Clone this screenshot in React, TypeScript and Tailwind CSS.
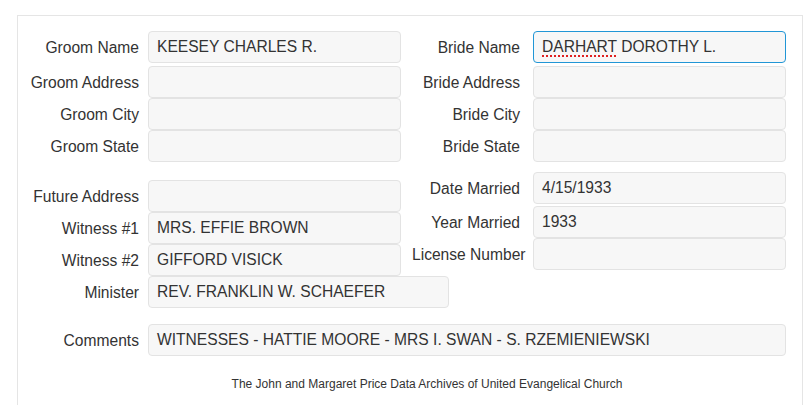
import type { ReactNode } from 'react';

const font = { fontFamily: '"Liberation Sans", Arial, sans-serif' };

type FieldProps = {
  label: string;
  value?: ReactNode;
  focused?: boolean;
  inputWidth?: string;
  className?: string;
};

const Box = ({
  value,
  focused,
  width,
}: {
  value?: ReactNode;
  focused?: boolean;
  width: string;
}) => (
  <div
    className={`${width} h-[32px] shrink-0 flex items-center rounded-[4px] border bg-[#f7f7f7] pl-[8px] text-[15.6px] text-[#333] whitespace-nowrap ${
      focused ? 'border-[#2196d6]' : 'border-[#e3e3e3]'
    }`}
  >
    {value}
  </div>
);

const LeftField = ({ label, value, inputWidth = 'w-[253px]', className = '' }: FieldProps) => (
  <div className={`flex items-center ${className}`}>
    <div className="w-[121px] shrink-0 text-right text-[15.6px] text-[#333] whitespace-nowrap pt-[2px]">
      {label}
    </div>
    <div className="ml-[9px]">
      <Box value={value} width={inputWidth} />
    </div>
  </div>
);

const RightField = ({ label, value, focused, className = '' }: FieldProps) => (
  <div className={`flex items-center ${className}`}>
    <div className="w-[108px] shrink-0 text-right text-[15.6px] text-[#333] whitespace-nowrap pt-[2px]">
      {label}
    </div>
    <div className="ml-[13px]">
      <Box value={value} focused={focused} width="w-[253px]" />
    </div>
  </div>
);

export default function App() {
  return (
    <div className="w-[805px] h-[405px] overflow-hidden bg-white" style={font}>
      <div className="ml-[17px] mt-[15px] w-[786px] h-[400px] border border-b-0 border-[#e5e5e5] pt-[15px]">
        {/* groom / bride */}
        <div className="flex">
          <div className="w-[383px] shrink-0">
            <LeftField label="Groom Name" value="KEESEY CHARLES R." className="mb-[3px]" />
            <LeftField label="Groom Address" />
            <LeftField label="Groom City" />
            <LeftField label="Groom State" />
          </div>
          <div className="pl-[11px]">
            <RightField
              label="Bride Name"
              focused
              className="mb-[3px]"
              value={
                <span>
                  <span className="underline decoration-dotted decoration-[#e02020] decoration-2 underline-offset-[3px]">
                    DARHART
                  </span>{' '}
                  DOROTHY L.
                </span>
              }
            />
            <RightField label="Bride Address" />
            <RightField label="Bride City" />
            <RightField label="Bride State" />
          </div>
        </div>

        {/* wedding details */}
        <div className="flex">
          <div className="w-[383px] shrink-0 mt-[18px]">
            <LeftField label="Future Address" />
            <LeftField label="Witness #1" value="MRS. EFFIE BROWN" />
            <LeftField label="Witness #2" value="GIFFORD VISICK" />
            <LeftField
              label="Minister"
              value="REV. FRANKLIN W. SCHAEFER"
              inputWidth="w-[301px]"
            />
          </div>
          <div className="pl-[11px] mt-[10px]">
            <RightField label="Date Married" value="4/15/1933" className="mb-[2px]" />
            <RightField label="Year Married" value="1933" />
            <RightField label="License Number" />
          </div>
        </div>

        <LeftField
          label="Comments"
          value="WITNESSES - HATTIE MOORE - MRS I. SWAN - S. RZEMIENIEWSKI"
          inputWidth="w-[638px]"
          className="mt-[16px]"
        />

        <div className="mt-[20px] pl-[34px] text-center text-[12px] leading-[16px] text-[#333]">
          The John and Margaret Price Data Archives of United Evangelical Church
        </div>
      </div>
    </div>
  );
}
